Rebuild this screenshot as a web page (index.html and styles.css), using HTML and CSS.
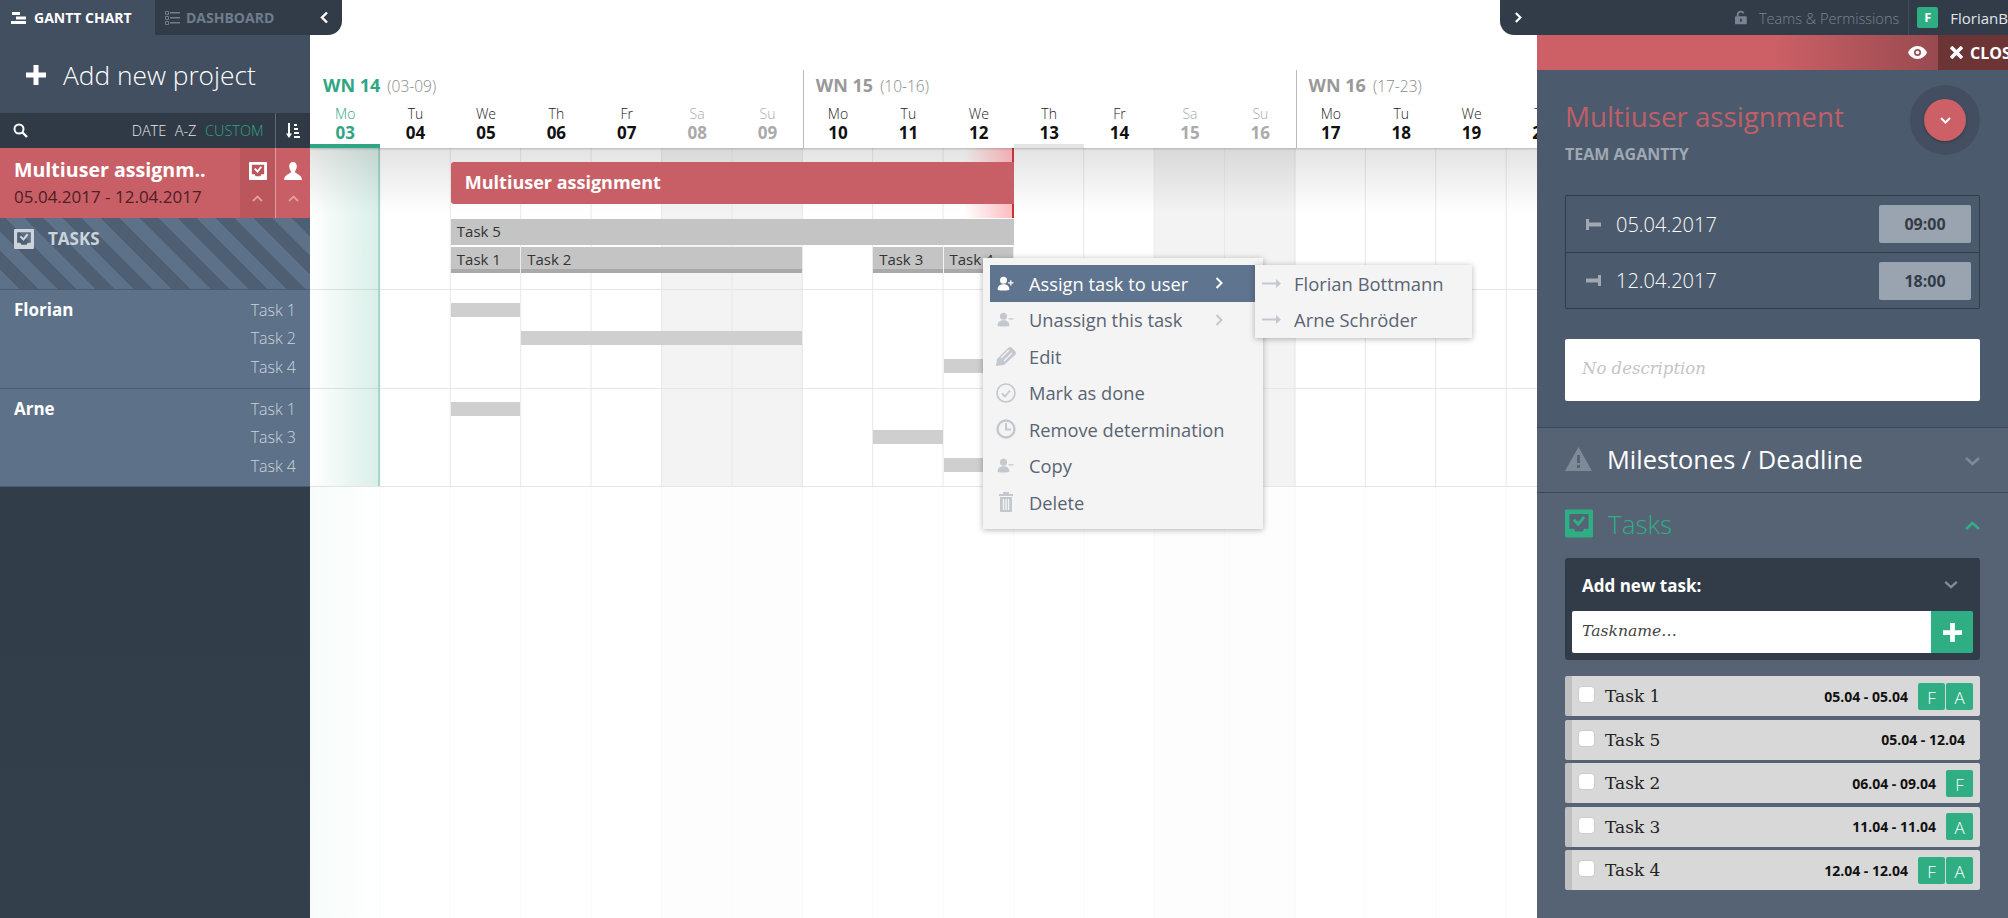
FILE: index.html
```html
<!DOCTYPE html>
<html lang="en">
<head>
    <meta charset="UTF-8">
    <title>Agantty</title>
    <link rel="stylesheet" href="styles.css">
</head>
<body>
<div class="app">

    <!-- left column -->
    <aside class="side">
        <div class="tabs">
            <div class="tab tab-on">
                <svg width="16" height="14" viewBox="0 0 16 14"><path fill="#fff" d="M1 1h8v3H1zM5 5.500h10v3H5zM0 10h15v3H0z"/></svg>
                GANTT CHART
            </div>
            <div class="tab tab-off">
                <svg width="15" height="14" viewBox="0 0 15 14"><path fill="none" stroke="#6f7d8d" d="M.5.5h3v3h-3zM.5 5.500h3v3h-3zM.5 10.500h3v3h-3z"/><path fill="#6f7d8d" d="M5 1h10v1.500H5zM5 6h10v1.500H5zM5 11h10v1.500H5z"/></svg>
                DASHBOARD
                <svg class="tab-arrow" width="9" height="13" viewBox="0 0 9 13"><path fill="none" stroke="#fff" stroke-width="2.400" d="M7 1.500 2 6.500l5 5"/></svg>
            </div>
        </div>
        <div class="add-project">
            <svg width="20" height="20" viewBox="0 0 20 20"><path fill="#fff" d="M7.500 0h5v7.500H20v5h-7.500V20h-5v-7.500H0v-5h7.500z"/></svg>
            <span>Add new project</span>
        </div>
        <div class="sortbar">
            <svg class="search" width="15" height="15" viewBox="0 0 15 15"><circle cx="6" cy="6" r="4.500" fill="none" stroke="#fff" stroke-width="2"/><path stroke="#fff" stroke-width="2.400" d="m9.500 9.500 4.500 4.500"/></svg>
            <span class="sort">DATE</span>
            <span class="sort">A-Z</span>
            <span class="sort sort-on">CUSTOM</span>
            <div class="sort-icon">
                <svg width="14" height="15" viewBox="0 0 14 15"><path fill="#fff" d="M2 0h2v10.500h2L3 15 0 10.500h2zM8 1h3v2H8zM8 5h4v2H8zM8 9h5v2H8zM8 13h6v2H8z"/></svg>
            </div>
        </div>
        <div class="project">
            <div class="project-text">
                <div class="project-name">Multiuser assignm..</div>
                <div class="project-date">05.04.2017 - 12.04.2017</div>
            </div>
            <div class="project-btn project-btn-dark">
                <svg width="18" height="18" viewBox="0 0 19 19"><path fill="#fff" fill-rule="evenodd" d="M1 0h17a1 1 0 0 1 1 1v17a1 1 0 0 1-1 1H1a1 1 0 0 1-1-1V1a1 1 0 0 1 1-1zm2 3v10h3l1 2h5l1-2h3V3z"/><path fill="none" stroke="#fff" stroke-width="2" d="m6 7 3 3 4-5"/></svg>
                <svg class="up" width="11" height="7" viewBox="0 0 11 7"><path fill="none" stroke="#e29da1" stroke-width="1.800" d="m1 6 4.500-4.500L10 6"/></svg>
            </div>
            <div class="project-btn">
                <svg width="18" height="18" viewBox="0 0 19 19"><path fill="#fff" d="M9.500 0c2.500 0 4 2 4 4.500S12 9 11.500 10.500c0 1.500 7.500 2.500 7.500 8.500H0c0-6 7.500-7 7.500-8.500C7 9 5.500 7 5.500 4.500S7 0 9.500 0z"/></svg>
                <svg class="up" width="11" height="7" viewBox="0 0 11 7"><path fill="none" stroke="#e29da1" stroke-width="1.800" d="m1 6 4.500-4.500L10 6"/></svg>
            </div>
        </div>
        <div class="tasks-head">
            <svg width="20" height="20" viewBox="0 0 19 19"><path fill="#ccd3db" fill-rule="evenodd" d="M1 0h17a1 1 0 0 1 1 1v17a1 1 0 0 1-1 1H1a1 1 0 0 1-1-1V1a1 1 0 0 1 1-1zm2 3v10h3l1 2h5l1-2h3V3z"/><path fill="none" stroke="#ccd3db" stroke-width="2" d="m6 7 3 3 4-5"/></svg>
            TASKS
        </div>
        <div class="user">
            <div class="user-name">Florian</div>
            <div class="user-tasks"><div>Task 1</div><div>Task 2</div><div>Task 4</div></div>
        </div>
        <div class="user user-last">
            <div class="user-name">Arne</div>
            <div class="user-tasks"><div>Task 1</div><div>Task 3</div><div>Task 4</div></div>
        </div>
    </aside>

    <!-- timeline -->
    <main class="gantt">
        <div class="weeks">
            <div class="week">
                <div class="week-label week-now"><b>WN 14</b> <span>(03-09)</span></div>
                <div class="days">
                    <div class="day day-today">Mo<b>03</b></div>
                    <div class="day">Tu<b>04</b></div>
                    <div class="day">We<b>05</b></div>
                    <div class="day">Th<b>06</b></div>
                    <div class="day">Fr<b>07</b></div>
                    <div class="day day-off">Sa<b>08</b></div>
                    <div class="day day-off">Su<b>09</b></div>
                </div>
            </div>
            <div class="week week-line">
                <div class="week-label"><b>WN 15</b> <span>(10-16)</span></div>
                <div class="days">
                    <div class="day">Mo<b>10</b></div>
                    <div class="day">Tu<b>11</b></div>
                    <div class="day">We<b>12</b></div>
                    <div class="day day-mark">Th<b>13</b></div>
                    <div class="day">Fr<b>14</b></div>
                    <div class="day day-off">Sa<b>15</b></div>
                    <div class="day day-off">Su<b>16</b></div>
                </div>
            </div>
            <div class="week week-line">
                <div class="week-label"><b>WN 16</b> <span>(17-23)</span></div>
                <div class="days">
                    <div class="day">Mo<b>17</b></div>
                    <div class="day">Tu<b>18</b></div>
                    <div class="day">We<b>19</b></div>
                    <div class="day">Th<b>20</b></div>
                </div>
            </div>
        </div>

        <div class="chart">
            <div class="row row-project">
                <div class="bar bar-project">Multiuser assignment</div>
                <div class="bar bar-task task-5">Task 5</div>
                <div class="bar bar-task bar-foot task-1">Task 1</div>
                <div class="bar bar-task bar-foot task-2">Task 2</div>
                <div class="bar bar-task bar-foot task-3">Task 3</div>
                <div class="bar bar-task bar-foot task-4">Task 4</div>
            </div>
            <div class="row row-user">
                <div class="bar bar-task task-1 lane-1"></div>
                <div class="bar bar-task task-2 lane-2"></div>
                <div class="bar bar-task task-4 lane-3"></div>
            </div>
            <div class="row row-user row-user-last">
                <div class="bar bar-task task-1 lane-1"></div>
                <div class="bar bar-task task-3 lane-2"></div>
                <div class="bar bar-task task-4 lane-3"></div>
            </div>
            <div class="row-rest"></div>

            <div class="today"></div>
            <div class="top-shade"></div>
            <div class="end-glow"></div>

            <div class="menu">
                <div class="menu-item menu-on">
                    <svg width="20" height="15" viewBox="0 0 20 18"><circle cx="7" cy="5" r="4.200" fill="#fff"/><path fill="#fff" d="M0 16c0-4 3-6 7-6s7 2 7 6c0 1-1 1.500-7 1.500S0 17 0 16zM15 5h1.500v2.500H19V9h-2.500v2.500H15V9h-2.500V7.500H15z"/></svg>
                    Assign task to user
                    <svg class="menu-arrow" width="8" height="12" viewBox="0 0 8 12"><path fill="none" stroke="#fff" stroke-width="2" d="m1.500 1 5 5-5 5"/></svg>
                </div>
                <div class="menu-item">
                    <svg width="20" height="15" viewBox="0 0 20 18"><circle cx="7" cy="5" r="4.200" fill="#c3c8cf"/><path fill="#c3c8cf" d="M0 16c0-4 3-6 7-6s7 2 7 6c0 1-1 1.500-7 1.500S0 17 0 16zM13 7.500h6V9h-6z"/></svg>
                    Unassign this task
                    <svg class="menu-arrow" width="8" height="12" viewBox="0 0 8 12"><path fill="none" stroke="#c3c8cf" stroke-width="2" d="m1.500 1 5 5-5 5"/></svg>
                </div>
                <div class="menu-item">
                    <svg width="20" height="20" viewBox="0 0 20 20"><path fill="#c3c8cf" d="M0 20l1-7L12 2q2-2 4 0l3 3q2 2 0 4L8 19z"/><path stroke="#f4f4f4" stroke-width="1.300" d="m5 12 8-8M8 15l8-8"/></svg>
                    Edit
                </div>
                <div class="menu-item">
                    <svg width="20" height="20" viewBox="0 0 20 20"><circle cx="10" cy="10" r="9" fill="none" stroke="#c3c8cf" stroke-width="1.600"/><path fill="none" stroke="#c3c8cf" stroke-width="1.800" d="m6 10.500 3 3 5-6"/></svg>
                    Mark as done
                </div>
                <div class="menu-item">
                    <svg width="20" height="20" viewBox="0 0 20 20"><circle cx="10" cy="10" r="8.500" fill="none" stroke="#c3c8cf" stroke-width="2.400"/><path fill="none" stroke="#c3c8cf" stroke-width="2" d="M10 4v6.500h5"/></svg>
                    Remove determination
                </div>
                <div class="menu-item">
                    <svg width="20" height="15" viewBox="0 0 20 18"><circle cx="7" cy="5" r="4.200" fill="#c3c8cf"/><path fill="#c3c8cf" d="M0 16c0-4 3-6 7-6s7 2 7 6c0 1-1 1.500-7 1.500S0 17 0 16zM13 7.500h6V9h-6z"/></svg>
                    Copy
                </div>
                <div class="menu-item">
                    <svg width="20" height="20" viewBox="0 0 20 20"><path fill="#c3c8cf" d="M7 0h6v2h4v2H3V2h4zM4 5h12v14a1 1 0 0 1-1 1H5a1 1 0 0 1-1-1z"/><path stroke="#f4f4f4" stroke-width="1.300" d="M7.500 7v11M10 7v11M12.500 7v11"/></svg>
                    Delete
                </div>
                <div class="submenu">
                    <div class="submenu-item">
                        <svg width="19" height="9" viewBox="0 0 19 9"><path fill="#c3c8cf" d="M0 3.500h14V0l5 4.500L14 9V5.500H0z"/></svg>
                        Florian Bottmann
                    </div>
                    <div class="submenu-item">
                        <svg width="19" height="9" viewBox="0 0 19 9"><path fill="#c3c8cf" d="M0 3.500h14V0l5 4.500L14 9V5.500H0z"/></svg>
                        Arne Schröder
                    </div>
                </div>
            </div>
        </div>
    </main>

    <!-- right column -->
    <section class="panel">
        <div class="topbar">
            <svg class="topbar-arrow" width="9" height="13" viewBox="0 0 9 13"><path fill="none" stroke="#fff" stroke-width="2.400" d="m2 1.500 5 5-5 5"/></svg>
            <svg class="lock" width="13" height="15" viewBox="0 0 13 15"><path fill="none" stroke="#778494" stroke-width="2" d="M3 6V4a3.400 3.400 0 0 1 6.500-1"/><path fill="#778494" fill-rule="evenodd" d="M1 6h11a1 1 0 0 1 1 1v7a1 1 0 0 1-1 1H1a1 1 0 0 1-1-1V7a1 1 0 0 1 1-1zm4.500 3v3h2V9z"/></svg>
            <span class="topbar-link">Teams &amp; Permissions</span>
            <div class="topbar-user">
                <span class="avatar">F</span>
                <span class="topbar-name">FlorianB</span>
            </div>
        </div>
        <div class="redbar">
            <svg width="19" height="13" viewBox="0 0 19 13"><path fill="#fff" fill-rule="evenodd" d="M9.500 0C14 0 17.500 3 19 6.500 17.500 10 14 13 9.500 13S1.500 10 0 6.500C1.500 3 5 0 9.500 0zm0 3a3.500 3.500 0 1 0 0 7 3.500 3.500 0 0 0 0-7z"/><circle cx="9.500" cy="6.500" r="1.800" fill="#fff"/></svg>
            <div class="close">
                <svg width="13" height="13" viewBox="0 0 13 13"><path stroke="#fff" stroke-width="3.600" d="m1 1 11 11M12 1 1 12"/></svg>
                CLOSE
            </div>
        </div>

        <div class="info">
            <div class="info-head">
                <div>
                    <h1 class="info-title">Multiuser assignment</h1>
                    <div class="info-team">TEAM AGANTTY</div>
                </div>
                <div class="round-outer">
                    <div class="round-btn">
                        <svg width="11" height="7" viewBox="0 0 11 7"><path fill="none" stroke="#fff" stroke-width="2" d="m1 1 4.500 4.500L10 1"/></svg>
                    </div>
                </div>
            </div>
            <div class="dates">
                <div class="date-row">
                    <svg width="15" height="11" viewBox="0 0 15 11"><path fill="#a0a8b2" d="M0 0h3v11H0zM3 3.500h12v4H3z"/></svg>
                    <span class="date-text">05.04.2017</span>
                    <span class="time">09:00</span>
                </div>
                <div class="date-row">
                    <svg width="15" height="11" viewBox="0 0 15 11"><path fill="#a0a8b2" d="M12 0h3v11h-3zM0 3.500h12v4H0z"/></svg>
                    <span class="date-text">12.04.2017</span>
                    <span class="time">18:00</span>
                </div>
            </div>
            <div class="desc">No description</div>
        </div>

        <div class="section section-milestones">
            <svg width="27" height="24" viewBox="0 0 27 24"><path fill="#7f8a99" fill-rule="evenodd" d="M13.500 0 27 24H0zM12 8v8h3V8zm0 10v3h3v-3z"/></svg>
            <span>Milestones / Deadline</span>
            <svg class="section-arrow" width="15" height="9" viewBox="0 0 15 9"><path fill="none" stroke="#7f8a99" stroke-width="2.600" d="m1 1 6.500 6L14 1"/></svg>
        </div>

        <div class="tasks">
            <div class="section section-tasks">
                <svg width="28" height="29" viewBox="0 0 19 19"><path fill="#2fae84" fill-rule="evenodd" d="M1 0h17a1 1 0 0 1 1 1v17a1 1 0 0 1-1 1H1a1 1 0 0 1-1-1V1a1 1 0 0 1 1-1zm2 3v10h3l1 2h5l1-2h3V3z"/><path fill="none" stroke="#2fae84" stroke-width="2" d="m6 7 3 3 4-5"/></svg>
                <span>Tasks</span>
                <svg class="section-arrow" width="15" height="9" viewBox="0 0 15 9"><path fill="none" stroke="#2fae84" stroke-width="2.600" d="m1 8 6.500-6L14 8"/></svg>
            </div>
            <div class="newtask">
                <div class="newtask-head">
                    Add new task:
                    <svg width="14" height="8" viewBox="0 0 15 9"><path fill="none" stroke="#7f8a99" stroke-width="2.600" d="m1 1 6.500 6L14 1"/></svg>
                </div>
                <div class="newtask-form">
                    <div class="newtask-input">Taskname…</div>
                    <div class="newtask-add">
                        <svg width="19" height="19" viewBox="0 0 20 20"><path fill="#fff" d="M7.500 0h5v7.500H20v5h-7.500V20h-5v-7.500H0v-5h7.500z"/></svg>
                    </div>
                </div>
            </div>
            <div class="tasklist">
                <div class="task"><span class="check"></span><span class="task-name">Task 1</span><span class="task-date">05.04 - 05.04</span><span class="badge">F</span><span class="badge">A</span></div>
                <div class="task"><span class="check"></span><span class="task-name">Task 5</span><span class="task-date task-date-solo">05.04 - 12.04</span></div>
                <div class="task"><span class="check"></span><span class="task-name">Task 2</span><span class="task-date">06.04 - 09.04</span><span class="badge">F</span></div>
                <div class="task"><span class="check"></span><span class="task-name">Task 3</span><span class="task-date">11.04 - 11.04</span><span class="badge">A</span></div>
                <div class="task"><span class="check"></span><span class="task-name">Task 4</span><span class="task-date">12.04 - 12.04</span><span class="badge">F</span><span class="badge">A</span></div>
            </div>
        </div>
    </section>
</div>
</body>
</html>
```

FILE: styles.css
```css
* {
    margin: 0;
    padding: 0;
    box-sizing: border-box;
}
html, body {
    height: 100%;
    overflow: hidden;
}
body {
    font-family: "Open Sans", sans-serif;
    color: #333;
    background: #fff;
}
.app {
    display: flex;
    height: 918px;
    width: 2008px;
    overflow: hidden;
}
b {
    font-weight: 700;
}

/* left column */
.side {
    flex: none;
    width: 310px;
    display: flex;
    flex-direction: column;
    background: linear-gradient(#2f3a46, #343f4c);
    position: relative;
    z-index: 5;
}
.tabs {
    display: flex;
    width: 342px;
    height: 35px;
    flex: none;
    font-size: 14px;
    font-weight: 700;
}
.tab {
    display: flex;
    align-items: center;
}
.tab-on {
    width: 155px;
    padding-left: 11px;
    gap: 7px;
    color: #fff;
    background: #414f61;
}
.tab-off {
    flex: 1;
    padding-left: 10px;
    gap: 6px;
    color: #6f7d8d;
    background: #323c48;
    border-bottom-right-radius: 14px;
}
.tab-arrow {
    margin-left: auto;
    margin-right: 13px;
}
.add-project {
    height: 78px;
    flex: none;
    background: #414f61;
    display: flex;
    align-items: center;
    padding: 2px 0 0 26px;
    gap: 17px;
    color: #fff;
    font-size: 26.300px;
    font-weight: 300;
}
.sortbar {
    height: 35px;
    flex: none;
    background: #2f3a46;
    display: flex;
    align-items: center;
    padding-left: 13px;
    color: #e4e8ec;
    font-size: 14.500px;
    font-weight: 300;
    gap: 8.500px;
}
.search {
    margin-right: auto;
}
.sort-on {
    color: #2fa583;
}
.sort-icon {
    width: 35px;
    height: 100%;
    margin-left: 3px;
    border-left: 1px solid #5a6675;
    display: flex;
    align-items: center;
    justify-content: center;
}
.project {
    height: 70px;
    flex: none;
    display: flex;
    background: #c95f66;
}
.project-text {
    flex: 1;
    padding: 8px 0 0 14px;
    white-space: nowrap;
}
.project-name {
    color: #fff;
    font-size: 19.600px;
    font-weight: 700;
    line-height: 28px;
}
.project-date {
    color: #4d2024;
    font-size: 17px;
    line-height: 26px;
}
.project-btn {
    width: 35px;
    display: flex;
    flex-direction: column;
    align-items: center;
    padding-top: 14px;
    border-left: 1px solid #dd9ea2;
}
.project-btn-dark {
    background: #bb565d;
    border-left: 0;
}
.up {
    margin-top: 15px;
}
.tasks-head {
    height: 72px;
    flex: none;
    padding: 11px 0 0 14px;
    display: flex;
    align-items: flex-start;
    gap: 14px;
    color: #ccd3db;
    font-size: 17px;
    font-weight: 700;
    line-height: 20px;
    background: repeating-linear-gradient(45deg, #5d7189 0, #5d7189 13.500px, #4e5f73 13.500px, #4e5f73 27px);
    border-bottom: 1px solid #4b5c71;
}
.user {
    flex: none;
    height: 99px;
    background: #5d7189;
    border-bottom: 1px solid #4b5c71;
    display: flex;
    justify-content: space-between;
    padding: 6px 14px 0 14px;
}
.user-last {
    height: 98px;
}
.user-name {
    color: #fff;
    font-size: 17px;
    font-weight: 700;
    line-height: 28px;
}
.user-tasks {
    color: #ccd4dd;
    font-size: 16px;
    line-height: 28.300px;
    font-weight: 300;
}

/* timeline */
.gantt {
    flex: none;
    width: 1227px;
    display: flex;
    flex-direction: column;
    overflow: hidden;
}
.weeks {
    height: 148px;
    flex: none;
    display: flex;
    padding-top: 70px;
    box-shadow: 0 1px 2px rgba(0, 0, 0, .2);
    position: relative;
    z-index: 2;
    background: #fff;
}
.week {
    flex: none;
    width: 492.800px;
    display: flex;
    flex-direction: column;
}
.week-line {
    box-shadow: inset 1px 0 #bbb;
}
.week-label {
    height: 35px;
    padding: 3px 0 0 13px;
    line-height: 24px;
    font-size: 15.500px;
    font-weight: 300;
    color: #8a8a8a;
}
.week-label b {
    font-size: 18px;
    color: #999;
}
.week-label span {
    margin-left: 3px;
}
.week-now b {
    color: #2fa583;
}
.days {
    display: flex;
    flex: 1;
}
.day {
    flex: none;
    width: 70.400px;
    text-align: center;
    font-size: 14px;
    line-height: 18px;
    font-weight: 300;
    color: #222;
}
.day b {
    display: block;
    font-size: 17px;
    line-height: 19px;
    color: #111;
}
.day-off,
.day-off b {
    color: #aaa;
}
.day-today {
    color: #2fa583;
    border-bottom: 4px solid #2fa583;
}
.day-today b {
    color: #2fa583;
}
.day-mark {
    border-bottom: 4px solid #e4e4e4;
}

.chart {
    flex: 1;
    position: relative;
    display: flex;
    flex-direction: column;
}
.row {
    display: grid;
    grid-template-columns: repeat(20, 70.400px);
    flex: none;
    border-bottom: 1px solid #e6e6e6;
    background:
        linear-gradient(to right, transparent 69.400px, #e8e8e8 69.400px) 0 0 / 70.400px 100%,
        linear-gradient(to right, transparent 352px, #f3f3f3 352px) 0 0 / 492.800px 100%;
}
.row-project {
    height: 142px;
    padding-top: 14px;
    grid-template-rows: 42px 26px 26px;
    row-gap: 2px;
}
.row-user {
    height: 99px;
    padding-top: 13px;
    grid-template-rows: 14px 14px 14px;
    row-gap: 14px;
}
.row-user-last {
    height: 98px;
}
.row-rest {
    flex: 1;
    background:
        linear-gradient(to right, transparent 69.400px, #fafafa 69.400px) 0 0 / 70.400px 100%,
        linear-gradient(to right, transparent 352px, #fdfdfd 352px) 0 0 / 492.800px 100%;
}
.bar {
    margin-right: 1px;
    white-space: nowrap;
    overflow: hidden;
    position: relative;
    z-index: 1;
}
.bar-project {
    grid-column: 3 / 11;
    grid-row: 1;
    height: 42px;
    background: #c95f66;
    border-radius: 3px 0 0 3px;
    color: #fff;
    font-size: 18px;
    font-weight: 700;
    line-height: 40px;
    padding-left: 14px;
    margin-right: 0;
}
.bar-task {
    background: #c4c4c4;
    color: #333;
    font-size: 15px;
    line-height: 25px;
    padding-left: 6px;
}
.row-user .bar-task {
    background: #cfcfcf;
}
.bar-foot {
    border-bottom: 4px solid #a9a9a9;
    grid-row: 3;
}
.task-5 {
    grid-column: 3 / 11;
    grid-row: 2;
    margin-top: 13px;
    margin-bottom: -13px;
    margin-right: 0;
}
.task-1 { grid-column: 3 / 4; }
.task-2 { grid-column: 4 / 8; }
.task-3 { grid-column: 9 / 10; }
.task-4 { grid-column: 10 / 11; }
.row-project .bar-foot {
    margin-top: 13px;
    margin-bottom: -13px;
}
.lane-1 { grid-row: 1; }
.lane-2 { grid-row: 2; }
.lane-3 { grid-row: 3; }

.today {
    position: absolute;
    left: 0;
    top: 0;
    width: 70px;
    height: 338px;
    border-right: 2px solid #a5d9c5;
    background: linear-gradient(to right, rgba(47, 165, 131, 0), rgba(47, 165, 131, .18));
}
.today::after {
    content: "";
    position: absolute;
    left: 0;
    top: 338px;
    width: 70px;
    height: 432px;
    background: linear-gradient(to right, rgba(47, 165, 131, .04), rgba(47, 165, 131, 0));
}
.top-shade {
    position: absolute;
    left: 0;
    right: 0;
    top: 0;
    height: 65px;
    background: linear-gradient(rgba(0, 0, 0, .11), rgba(0, 0, 0, 0));
}
.end-glow {
    position: absolute;
    left: 654px;
    top: 0;
    width: 50px;
    height: 70px;
    border-right: 2px solid #c4343c;
    background: linear-gradient(to right, rgba(255, 90, 100, 0), rgba(255, 90, 100, .4));
}

/* context menu */
.menu {
    position: absolute;
    left: 673px;
    top: 110px;
    width: 280px;
    height: 271px;
    padding: 7px;
    background: #f4f4f4;
    box-shadow: 0 1px 6px rgba(0, 0, 0, .3);
    z-index: 3;
}
.menu-item {
    height: 36.500px;
    display: flex;
    align-items: center;
    padding-left: 6px;
    gap: 13px;
    font-size: 18.300px;
    color: #5a6472;
}
.menu-item svg {
    flex: none;
}
.menu-on {
    background: #5f748e;
    color: #fff;
}
.menu-arrow {
    position: absolute;
    left: 232px;
}
.submenu {
    position: absolute;
    left: 272px;
    top: 7px;
    width: 217px;
    background: #f4f4f4;
    box-shadow: 0 1px 6px rgba(0, 0, 0, .3);
}
.submenu-item {
    height: 36.500px;
    display: flex;
    align-items: center;
    padding-left: 7px;
    gap: 13px;
    font-size: 18.400px;
    color: #5a6472;
}

/* right column */
.panel {
    flex: none;
    width: 471px;
    display: flex;
    flex-direction: column;
    position: relative;
    z-index: 4;
    background: #566375;
}
.topbar {
    height: 35px;
    flex: none;
    width: 508px;
    margin-left: -37px;
    background: #323c48;
    border-bottom-left-radius: 14px;
    display: flex;
    align-items: center;
    padding-left: 14px;
    white-space: nowrap;
    overflow: hidden;
    font-size: 14.600px;
}
.lock {
    margin-left: 213px;
}
.topbar-link {
    margin-left: 12px;
    color: #778494;
    font-weight: 300;
}
.topbar-user {
    height: 100%;
    margin-left: 9px;
    padding-left: 8px;
    border-left: 1px solid #414d5b;
    display: flex;
    align-items: center;
    gap: 12px;
}
.avatar {
    width: 21px;
    height: 21px;
    border-radius: 2px;
    background: #2fae84;
    color: #fff;
    text-align: center;
    line-height: 21px;
    font-size: 13px;
    font-weight: 700;
}
.topbar-name {
    color: #e2e6ea;
    font-size: 15px;
}
.redbar {
    height: 35px;
    flex: none;
    background: linear-gradient(to right, #cc6066 50%, #984a50 85%);
    display: flex;
    align-items: center;
    justify-content: flex-end;
    gap: 11px;
    overflow: hidden;
}
.close {
    flex: none;
    width: 70px;
    height: 100%;
    background: #6d3436;
    color: #fff;
    font-size: 16px;
    font-weight: 700;
    display: flex;
    align-items: center;
    gap: 7px;
    padding-left: 12px;
    white-space: nowrap;
    overflow: hidden;
}
.close svg {
    flex: none;
}
.info {
    height: 358px;
    flex: none;
    padding: 15px 28px 0;
    background: #4b5a6c;
    border-bottom: 1px solid #3b4757;
}
.info-head {
    display: flex;
    justify-content: space-between;
    height: 110px;
}
.info-title {
    font-size: 27.700px;
    font-weight: 400;
    color: #c05f68;
    line-height: 42px;
    margin-top: 10px;
}
.info-team {
    font-size: 16px;
    font-weight: 700;
    color: #a0a8b2;
    line-height: 24px;
    margin-top: 5px;
}
.round-outer {
    width: 70px;
    height: 70px;
    border-radius: 50%;
    background: #434f60;
    display: flex;
    align-items: center;
    justify-content: center;
}
.round-btn {
    width: 42px;
    height: 42px;
    border-radius: 50%;
    background: #cc6066;
    box-shadow: 0 1px 3px rgba(0, 0, 0, .3);
    display: flex;
    align-items: center;
    justify-content: center;
}
.dates {
    border: 1px solid #323c48;
    border-radius: 2px;
}
.date-row {
    height: 56px;
    display: flex;
    align-items: center;
    padding: 0 8px 0 20px;
}
.date-row + .date-row {
    border-top: 1px solid #323c48;
}
.date-text {
    color: #fff;
    font-size: 20px;
    font-weight: 300;
    margin-left: 15px;
}
.time {
    margin-left: auto;
    width: 92px;
    height: 38px;
    border-radius: 2px;
    background: #9aa3b0;
    color: #323c48;
    font-size: 16px;
    font-weight: 700;
    text-align: center;
    line-height: 38px;
}
.desc {
    margin-top: 30px;
    height: 62px;
    background: #fff;
    border-radius: 2px;
    padding-left: 17px;
    font-family: "DejaVu Serif", serif;
    font-style: italic;
    font-size: 16.500px;
    line-height: 60px;
    color: #c4c4c4;
}
.section {
    display: flex;
    align-items: center;
    padding: 0 28px;
    gap: 15px;
    color: #fff;
}
.section-milestones {
    height: 65px;
    padding-bottom: 2px;
    flex: none;
    font-size: 25.400px;
    border-bottom: 1px solid #3b4757;
}
.section-tasks {
    height: 65px;
    padding-bottom: 4px;
    font-size: 26px;
    font-weight: 300;
    color: #2fae84;
}
.section-arrow {
    margin-left: auto;
    margin-top: 4px;
}
.tasks {
    flex: 1;
}
.newtask {
    margin: 0 28px;
    height: 102px;
    background: #323c48;
    border-radius: 3px;
    padding: 7px;
}
.newtask-head {
    height: 46px;
    display: flex;
    align-items: center;
    justify-content: space-between;
    padding: 0 15px 6px 10px;
    color: #fff;
    font-size: 17px;
    font-weight: 700;
}
.newtask-form {
    display: flex;
    height: 42px;
}
.newtask-input {
    flex: 1;
    background: #fff;
    padding-left: 10px;
    font-family: "DejaVu Serif", serif;
    font-style: italic;
    font-size: 15.600px;
    line-height: 40px;
    color: #444;
    border-radius: 2px 0 0 2px;
}
.newtask-add {
    width: 42px;
    background: #2fae84;
    border-radius: 0 2px 2px 0;
    display: flex;
    align-items: center;
    justify-content: center;
}
.tasklist {
    margin: 16px 28px 0;
    display: flex;
    flex-direction: column;
    gap: 3.500px;
}
.task {
    height: 40px;
    background: #d8d8d8;
    border-left: 7px solid #c0c0c0;
    border-radius: 2px;
    display: flex;
    align-items: center;
    padding-right: 7px;
}
.check {
    width: 17px;
    height: 17px;
    margin-left: 6px;
    margin-top: -3px;
    background: #fff;
    border: 1px solid #ccc;
    border-radius: 4px;
}
.task-name {
    margin-left: 10px;
    font-family: "DejaVu Serif", serif;
    font-size: 17px;
    color: #222;
}
.task-date {
    margin-left: auto;
    margin-right: 9px;
    font-size: 14px;
    font-weight: 700;
    color: #111;
}
.task-date-solo {
    margin-right: 8px;
}
.badge {
    width: 27px;
    height: 27px;
    margin-left: 1px;
    background: #2fae84;
    color: #fff;
    border-radius: 2px;
    text-align: center;
    font-size: 17px;
    line-height: 29px;
    font-weight: 300;
}
```
